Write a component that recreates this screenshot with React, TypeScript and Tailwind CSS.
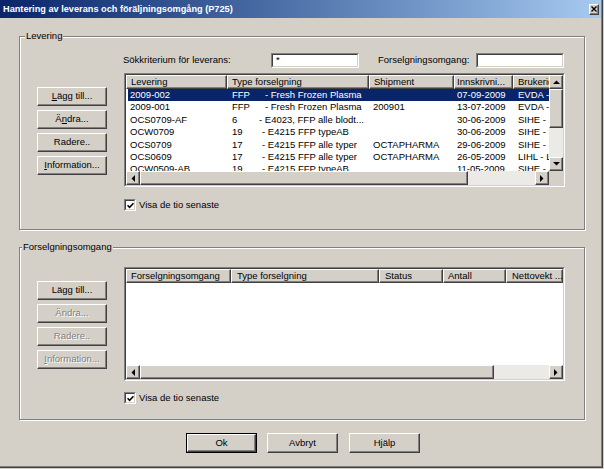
import type { ReactNode } from 'react';

const raised =
  'border border-t-white border-l-white border-r-[#404040] border-b-[#404040] shadow-[inset_-1px_-1px_0_#808080]';

type Dir = 'up' | 'down' | 'left' | 'right';

function Arrow({ dir }: { dir: Dir }) {
  if (dir === 'up')
    return (
      <svg width="7" height="4" viewBox="0 0 7 4">
        <polygon points="0,4 7,4 3.5,0.5" fill="#000" />
      </svg>
    );
  if (dir === 'down')
    return (
      <svg width="7" height="4" viewBox="0 0 7 4">
        <polygon points="0,0 7,0 3.5,3.5" fill="#000" />
      </svg>
    );
  if (dir === 'left')
    return (
      <svg width="4" height="7" viewBox="0 0 4 7">
        <polygon points="4,0 4,7 0.5,3.5" fill="#000" />
      </svg>
    );
  return (
    <svg width="4" height="7" viewBox="0 0 4 7">
      <polygon points="0,0 0,7 3.5,3.5" fill="#000" />
    </svg>
  );
}

function ScrollBtn({ dir }: { dir: Dir }) {
  return (
    <div className={`${raised} w-[14px] h-[14px] shrink-0 bg-[#d4d0c8] flex items-center justify-center`}>
      <Arrow dir={dir} />
    </div>
  );
}

function HScroll({ thumb }: { thumb: string }) {
  return (
    <div className="flex h-[14px] flex-1">
      <ScrollBtn dir="left" />
      <div className={`${raised} bg-[#d4d0c8] h-full shrink-0 ${thumb}`} />
      <div className="bg-[#eceae6] h-full flex-1" />
      <ScrollBtn dir="right" />
    </div>
  );
}

function Sunken({ className = '', inner = '', children }: { className?: string; inner?: string; children?: ReactNode }) {
  return (
    <div className={`border border-t-[#808080] border-l-[#808080] border-r-white border-b-white ${className}`}>
      <div className={`w-full h-full border border-t-[#404040] border-l-[#404040] border-r-[#d4d0c8] border-b-[#d4d0c8] ${inner}`}>
        {children}
      </div>
    </div>
  );
}

function Btn({ children, disabled, def, className = '' }: { children: ReactNode; disabled?: boolean; def?: boolean; className?: string }) {
  const inner = (
    <div
      className={`${raised} w-full h-full bg-[#d4d0c8] flex items-center justify-center whitespace-nowrap ${
        disabled ? 'text-[#808080] [text-shadow:1px_1px_0_#fff]' : 'text-black'
      }`}
    >
      {children}
    </div>
  );
  if (def) return <div className={`border border-black ${className}`}>{inner}</div>;
  return <div className={className}>{inner}</div>;
}

function Group({ label, labelPos, className, children }: { label: string; labelPos: string; className: string; children: ReactNode }) {
  return (
    <div className={`relative border border-[#808080] shadow-[1px_1px_0_#fff,inset_1px_1px_0_#fff] ${className}`}>
      <span className={`absolute top-[-7px] ${labelPos} bg-[#d4d0c8] px-[1px] leading-[12px]`}>{label}</span>
      {children}
    </div>
  );
}

function Hd({ w, pl = 'pl-[4px]', children }: { w: string; pl?: string; children: ReactNode }) {
  return (
    <div className={`${raised} ${w} ${pl} shrink-0 h-full bg-[#d4d0c8] flex items-center whitespace-nowrap overflow-hidden`}>
      {children}
    </div>
  );
}

function Check() {
  return (
    <div className="flex items-center h-[12px]">
      <Sunken className="w-[12px] h-[12px] shrink-0" inner="bg-white flex items-center justify-center">
        <svg width="7" height="7" viewBox="0 0 7 7">
          <path d="M0.5 3.2 L2.6 5.3 L6.5 1.2" stroke="#000" strokeWidth="1.6" fill="none" />
        </svg>
      </Sunken>
      <span className="ml-[3px] leading-[12px]">Visa de tio senaste</span>
    </div>
  );
}

const rows = [
  { lev: '2009-002', code: 'FFP', cw: 'w-[33px]', desc: '- Fresh Frozen Plasma', ship: '', date: '07-09-2009', user: 'EVDA - Eva Dahl', sel: true },
  { lev: '2009-001', code: 'FFP', cw: 'w-[33px]', desc: '- Fresh Frozen Plasma', ship: '200901', date: '13-07-2009', user: 'EVDA - Eva Dahl' },
  { lev: 'OCS0709-AF', code: '6', cw: 'w-[27px]', desc: '- E4023, FFP alle blodt...', ship: '', date: '30-06-2009', user: 'SIHE - Siri Hegg' },
  { lev: 'OCW0709', code: '19', cw: 'w-[30px]', desc: '- E4215 FFP typeAB', ship: '', date: '30-06-2009', user: 'SIHE - Siri Hegg' },
  { lev: 'OCS0709', code: '17', cw: 'w-[30px]', desc: '- E4215 FFP alle typer', ship: 'OCTAPHARMA', date: '29-06-2009', user: 'SIHE - Siri Hegg' },
  { lev: 'OCS0609', code: '17', cw: 'w-[30px]', desc: '- E4215 FFP alle typer', ship: 'OCTAPHARMA', date: '26-05-2009', user: 'LIHL - Lise Hall' },
  { lev: 'OCW0509-AB', code: '19', cw: 'w-[30px]', desc: '- E4215 FFP typeAB', ship: '', date: '11-05-2009', user: 'SIHE - Siri Hegg' },
];

function LeveringList() {
  return (
    <Sunken className="w-[441px] h-[114px]" inner="bg-white flex flex-col">
      <div className="flex h-[96px]">
        <div className="w-[423px] h-full overflow-hidden">
          <div className="flex h-[14px]">
            <Hd w="w-[101px]">Levering</Hd>
            <Hd w="w-[142px]">Type forselgning</Hd>
            <Hd w="w-[85px]">Shipment</Hd>
            <Hd w="w-[59px]" pl="pl-[2px]">Innskrivni...</Hd>
            <Hd w="w-[80px]">Brukerident</Hd>
          </div>
          {rows.map((r) => (
            <div
              key={r.lev}
              className={`ml-[2px] h-[12.4px] leading-[12px] flex whitespace-nowrap ${
                r.sel ? 'bg-[#0a246a] text-white' : 'text-black'
              }`}
            >
              <div className="w-[99px] shrink-0 pl-[2px]">{r.lev}</div>
              <div className="w-[142px] shrink-0 pl-[5px] flex overflow-hidden">
                <span className={`${r.cw} shrink-0`}>{r.code}</span>
                <span>{r.desc}</span>
              </div>
              <div className="w-[85px] shrink-0 pl-[4px]">{r.ship}</div>
              <div className="w-[59px] shrink-0 pl-[3px]">{r.date}</div>
              <div className="w-[80px] shrink-0 pl-[5px]">{r.user}</div>
            </div>
          ))}
        </div>
        <div className="w-[14px] h-full flex flex-col">
          <ScrollBtn dir="up" />
          <div className={`${raised} h-[39px] bg-[#d4d0c8] shrink-0`} />
          <div className="flex-1 bg-[#eceae6]" />
          <ScrollBtn dir="down" />
        </div>
      </div>
      <div className="flex h-[14px]">
        <HScroll thumb="w-[328px]" />
        <div className="w-[14px] h-full bg-[#d4d0c8]" />
      </div>
    </Sunken>
  );
}

function OmgangList() {
  return (
    <Sunken className="w-[441px] h-[114px]" inner="bg-white flex flex-col">
      <div className="flex h-[14px] overflow-hidden">
        <Hd w="w-[105px]">Forselgningsomgang</Hd>
        <Hd w="w-[148px]" pl="pl-[5px]">Type forselgning</Hd>
        <Hd w="w-[64px]" pl="pl-[5px]">Status</Hd>
        <Hd w="w-[63px]" pl="pl-[4px]">Antall</Hd>
        <Hd w="w-[57px]" pl="pl-[5px]">Nettovekt ...</Hd>
      </div>
      <div className="flex-1" />
      <div className="flex h-[14px]">
        <HScroll thumb="w-[354px]" />
      </div>
    </Sunken>
  );
}

export default function App() {
  return (
    <div className="w-[604px] h-[469px] bg-[#d4d0c8] text-[9.5px] text-black font-['Liberation_Sans',Arial,sans-serif]">
      <div className="w-[603px] h-[468px] border-r border-b border-[#404040]">
        <div className="w-full h-full border-r border-b border-[#808080] flex flex-col">
          {/* title bar */}
          <div className="h-[18px] shrink-0 bg-linear-to-r from-[#0a246a] to-[#a6caf0] flex items-center justify-between pl-[3px] pr-[2px]">
            <span className="text-white font-bold text-[9.2px] leading-[12px]">
              Hantering av leverans och föräljningsomgång (P725)
            </span>
            <div className={`${raised} w-[10px] h-[11px] bg-[#d4d0c8] flex items-center justify-center`}>
              <svg width="6" height="6" viewBox="0 0 6 6">
                <path d="M0.5 0.5 L5.5 5.5 M5.5 0.5 L0.5 5.5" stroke="#000" strokeWidth="1.4" />
              </svg>
            </div>
          </div>

          <Group label="Levering" labelPos="left-[5px]" className="mt-[18px] ml-[19px] w-[566px] h-[194px] shrink-0">
            <div className="flex">
              <div className="ml-[17px] pt-[50px] w-[70px] flex flex-col gap-[4px]">
                <Btn className="h-[19px]"><span><u>L</u>ägg till...</span></Btn>
                <Btn className="h-[19px]"><span>Ä<u>n</u>dra...</span></Btn>
                <Btn className="h-[19px]">Radere..</Btn>
                <Btn className="h-[19px]"><span><u>I</u>nformation...</span></Btn>
              </div>
              <div className="ml-[17px] pt-[16px] flex flex-col">
                <div className="flex items-center h-[15px]">
                  <span className="w-[148px] -ml-[1px] shrink-0">Sökkriterium för leverans:</span>
                  <Sunken className="w-[88px] h-[15px]" inner="bg-white pl-[3px] leading-[10px]">*</Sunken>
                  <span className="ml-[19px] w-[98px] shrink-0">Forselgningsomgang:</span>
                  <Sunken className="w-[88px] h-[15px]" inner="bg-white" />
                </div>
                <div className="mt-[5px]">
                  <LeveringList />
                </div>
                <div className="mt-[12px]">
                  <Check />
                </div>
              </div>
            </div>
          </Group>

          <Group label="Forselgningsomgang" labelPos="left-[2px]" className="mt-[17px] ml-[19px] w-[566px] h-[173px] shrink-0">
            <div className="flex">
              <div className="ml-[17px] pt-[33px] w-[70px] flex flex-col gap-[4px]">
                <Btn className="h-[19px]">Lägg till...</Btn>
                <Btn className="h-[19px]" disabled>Ändra...</Btn>
                <Btn className="h-[19px]" disabled>Radere..</Btn>
                <Btn className="h-[19px]" disabled><span><u>I</u>nformation...</span></Btn>
              </div>
              <div className="ml-[17px] pt-[19px] flex flex-col">
                <OmgangList />
                <div className="mt-[11px]">
                  <Check />
                </div>
              </div>
            </div>
          </Group>

          <div className="mt-[13px] pl-[186px] flex gap-[10px]">
            <Btn def className="w-[71px] h-[20px]">Ok</Btn>
            <Btn className="w-[71px] h-[20px]">Avbryt</Btn>
            <Btn className="w-[71px] h-[20px] ml-[1px]">Hjälp</Btn>
          </div>
        </div>
      </div>
    </div>
  );
}
